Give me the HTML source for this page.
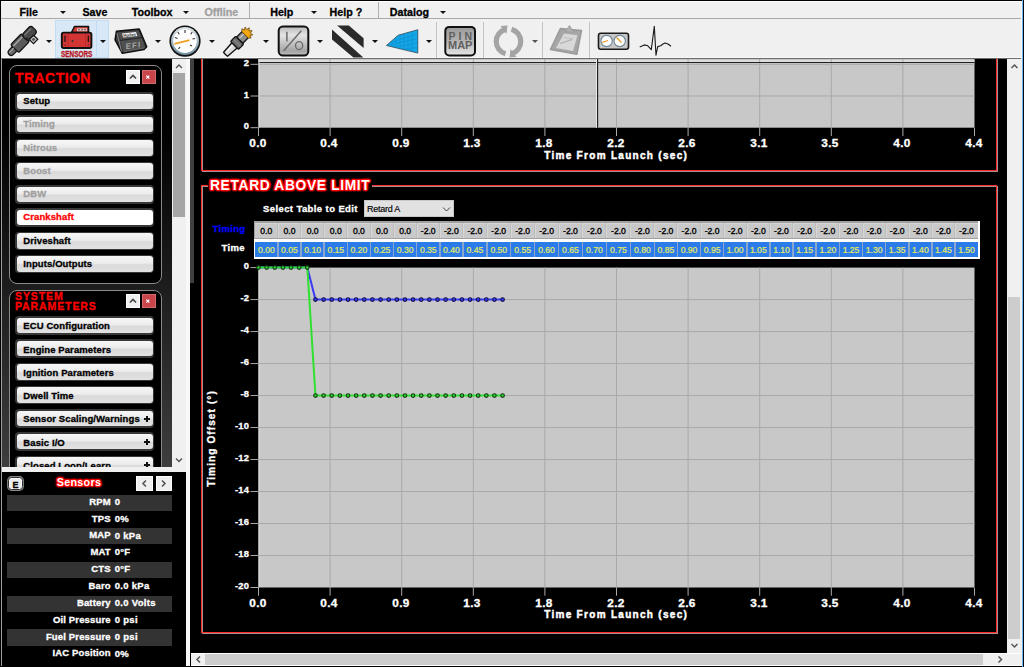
<!DOCTYPE html><html><head><meta charset="utf-8"><style>
*{margin:0;padding:0;box-sizing:border-box}
html,body{width:1024px;height:667px;overflow:hidden;background:#000;font-family:"Liberation Sans",sans-serif;position:relative}
.a{position:absolute}
.t{white-space:nowrap}
.s{-webkit-text-stroke:0.3px currentColor}
.btn{position:absolute;left:15px;width:139px;height:18.6px;border-radius:4px;background:#383838}
.btn b{position:absolute;left:1.5px;top:1.5px;right:1.5px;bottom:1.5px;border-radius:3px;background:linear-gradient(#f7f7f7,#ececec 45%,#dadada 55%,#e2e2e2)}
.btn.sel b{background:#fff}
.dd{position:absolute;width:0;height:0;border-left:3.2px solid transparent;border-right:3.2px solid transparent;border-top:3.4px solid #111}
</style></head><body>

<div class="a" style="left:1px;top:1px;width:1021px;height:17px;background:#f0f0f0"></div>
<div class="a" style="left:1px;top:18px;width:1021px;height:1px;background:#a8a8a8"></div>
<div class="a" style="left:1px;top:19px;width:1021px;height:39px;background:#f0f0f0"></div>
<div class="a" style="left:1px;top:57px;width:1021px;height:1px;background:#f8f8f8"></div>
<div class="a" style="left:1px;top:58px;width:1021px;height:1px;background:#6c6c6c"></div>
<div class="a" style="left:1021px;top:1px;width:1px;height:665px;background:#fdfaf2"></div>
<div class="a" style="left:1022px;top:0px;width:1px;height:667px;background:#6ab4f0"></div>
<div class="a" style="left:1023px;top:0px;width:1px;height:667px;background:#050a14"></div>
<div class="a" style="left:1px;top:1px;width:1020px;height:1px;background:#fff"></div>
<div class="a t s" style="left:19.50px;top:6.62px;font-size:10.7px;line-height:11.952px;color:#000;font-weight:bold;letter-spacing:0px;">File</div>
<div class="dd" style="left:59.8px;top:10.9px"></div>
<div class="a t s" style="left:82.40px;top:6.62px;font-size:10.7px;line-height:11.952px;color:#000;font-weight:bold;letter-spacing:0px;">Save</div>
<div class="a t s" style="left:131.70px;top:6.62px;font-size:10.7px;line-height:11.952px;color:#000;font-weight:bold;letter-spacing:0px;">Toolbox</div>
<div class="dd" style="left:183.2px;top:10.9px"></div>
<div class="a t s" style="left:204.40px;top:6.62px;font-size:10.7px;line-height:11.952px;color:#a0a0a0;font-weight:bold;letter-spacing:0px;">Offline</div>
<div class="a" style="left:249px;top:2px;width:1px;height:16px;background:#b0b0b0"></div>
<div class="a t s" style="left:270.20px;top:6.62px;font-size:10.7px;line-height:11.952px;color:#000;font-weight:bold;letter-spacing:0px;">Help</div>
<div class="dd" style="left:311.2px;top:10.9px"></div>
<div class="a t s" style="left:329.50px;top:6.62px;font-size:10.7px;line-height:11.952px;color:#000;font-weight:bold;letter-spacing:0px;">Help ?</div>
<div class="a" style="left:378px;top:2px;width:1px;height:16px;background:#b0b0b0"></div>
<div class="a t s" style="left:389.80px;top:6.62px;font-size:10.7px;line-height:11.952px;color:#000;font-weight:bold;letter-spacing:0px;">Datalog</div>
<div class="dd" style="left:439.8px;top:10.9px"></div>
<div class="a" style="left:436px;top:22px;width:1px;height:36px;background:#c4c4c4"></div>
<div class="a" style="left:483px;top:22px;width:1px;height:36px;background:#c4c4c4"></div>
<div class="a" style="left:542px;top:22px;width:1px;height:36px;background:#c4c4c4"></div>
<div class="a" style="left:589px;top:22px;width:1px;height:36px;background:#c4c4c4"></div>
<div class="a" style="left:55px;top:20px;width:54px;height:38px;background:#d9e8f6;border:1px solid #c3dcf3"></div>
<div class="a" style="left:96px;top:20px;width:1px;height:38px;background:#c3dcf3"></div>
<div class="dd" style="left:46.4px;top:40px"></div>
<div class="dd" style="left:100.2px;top:40px"></div>
<div class="dd" style="left:154.8px;top:40px"></div>
<div class="dd" style="left:208.9px;top:40px"></div>
<div class="dd" style="left:263px;top:40px"></div>
<div class="dd" style="left:317.3px;top:40px"></div>
<div class="dd" style="left:371.6px;top:40px"></div>
<div class="dd" style="left:426px;top:40px"></div>
<div class="dd" style="left:531.8px;top:40px;border-top-color:#555"></div>
<svg class="a" style="left:0;top:0" width="700" height="60" viewBox="0 0 700 60">
<defs>
<linearGradient id="g1" x1="0" y1="0" x2="0" y2="1"><stop offset="0" stop-color="#b8b8b8"/><stop offset="0.3" stop-color="#e4e4e4"/><stop offset="0.85" stop-color="#a4a4a4"/><stop offset="1" stop-color="#c4c4c4"/></linearGradient>
<linearGradient id="g2" x1="0" y1="0" x2="0" y2="1"><stop offset="0" stop-color="#9a9a9a"/><stop offset="0.5" stop-color="#b4b4b4"/><stop offset="1" stop-color="#e6e6e6"/></linearGradient>
<linearGradient id="g3" x1="0" y1="0" x2="0" y2="1"><stop offset="0" stop-color="#dfe6ea"/><stop offset="1" stop-color="#6f8c9c"/></linearGradient>
</defs>
<!-- injector -->
<g transform="translate(9.8,53.8) rotate(-46)">
<rect x="-1" y="-3.1" width="9.5" height="6.2" rx="2.8" fill="#6a6a6a" stroke="#151515" stroke-width="1.3"/>
<rect x="7" y="-5.6" width="15.5" height="11.2" rx="1.5" fill="#5a5a5a" stroke="#151515" stroke-width="1.3"/>
<rect x="21.5" y="-4.6" width="13.5" height="9.2" rx="3.2" fill="#4a4a4a" stroke="#151515" stroke-width="1.3"/>
<rect x="23.8" y="4.2" width="6" height="5.8" fill="#e0e0e0" stroke="#151515" stroke-width="1.3"/>
<rect x="25.3" y="5.7" width="3" height="2.8" fill="#555"/>
<line x1="8" y1="-2.8" x2="21" y2="-2.8" stroke="#a0a0a0" stroke-width="1.6"/>
<line x1="0.5" y1="-1.3" x2="7" y2="-1.3" stroke="#a9a9a9" stroke-width="1"/>
<line x1="23.5" y1="-2.3" x2="33" y2="-2.3" stroke="#7a7a7a" stroke-width="1.3"/>
<line x1="22" y1="2" x2="24" y2="2" stroke="#222" stroke-width="2"/>
</g>
<!-- ECU red -->
<path d="M71.5 32.5 L74.5 26.5 L88.5 26.5 L88.5 32.5 Z" fill="#d43a3a" stroke="#111" stroke-width="1.6" stroke-linejoin="round"/>
<rect x="77" y="28.3" width="10" height="3" fill="#e8c0c0"/>
<circle cx="79" cy="29.8" r="0.7" fill="#222"/><circle cx="82" cy="29.8" r="0.7" fill="#222"/><circle cx="85" cy="29.8" r="0.7" fill="#222"/>
<rect x="61.8" y="32.6" width="29.6" height="15.4" rx="1.8" fill="#d33535" stroke="#111" stroke-width="1.9"/>
<line x1="65" y1="35.5" x2="65" y2="42" stroke="#111" stroke-width="1.2"/>
<line x1="88.3" y1="35.5" x2="88.3" y2="42" stroke="#111" stroke-width="1.2"/>
<circle cx="65" cy="45" r="0.6" fill="#111"/><circle cx="88.3" cy="45" r="0.6" fill="#111"/>
<line x1="68" y1="34" x2="68" y2="47" stroke="#b82a2a" stroke-width="0.8"/>
<line x1="85.5" y1="34" x2="85.5" y2="47" stroke="#b82a2a" stroke-width="0.8"/>
<ellipse cx="72.5" cy="41" rx="0.9" ry="1.2" fill="#333"/>
<text x="76.7" y="56.8" font-family="Liberation Sans" font-weight="bold" font-size="8.2" fill="#b8161e" stroke="#b8161e" stroke-width="0.35" text-anchor="middle" textLength="31.3" lengthAdjust="spacingAndGlyphs">SENSORS</text>
<!-- EFI -->
<path d="M116.5 31.2 L139.2 29 L146.7 46.8 L144 49.5 L122.4 53.3 L115.1 39.8 Z" fill="#3c3c3c" stroke="#111" stroke-width="1.6" stroke-linejoin="round"/>
<path d="M118.2 32.6 L138.2 30.6 L141.5 37.4 L120.8 40 Z" fill="#4e4e4e"/>
<path d="M122 33.4 L136 32 L137.3 36 L123.2 37.6 Z" fill="#f4f4f4"/>
<text x="129.7" y="36.4" font-family="Liberation Sans" font-weight="bold" font-size="4.2" fill="#333" text-anchor="middle" transform="rotate(-6 129.7 35)">Holley</text>
<path d="M120.2 41 L142 38.2 L145 47.2 L123.4 51.4 Z" fill="#505050"/>
<line x1="117" y1="33" x2="121.5" y2="51.5" stroke="#8a8a8a" stroke-width="1"/>
<line x1="120" y1="40.4" x2="142" y2="37.6" stroke="#222" stroke-width="0.9"/>
<line x1="123.5" y1="51.8" x2="144.5" y2="47.8" stroke="#7a7a7a" stroke-width="0.8"/>
<text x="133.5" y="48.2" font-family="Liberation Sans" font-weight="bold" font-size="8" fill="#a4a4a4" text-anchor="middle" letter-spacing="1" transform="translate(133.5 45) rotate(-8) skewX(-8) translate(-133.5 -45)">EFI</text>
<!-- gauge -->
<circle cx="185" cy="41.1" r="15.6" fill="#111"/>
<circle cx="185" cy="41.1" r="14" fill="url(#g3)"/>
<circle cx="185" cy="41.1" r="11.8" fill="#fdfdfd"/>
<g stroke="#333" stroke-width="1.1">
<line x1="185" y1="30" x2="185" y2="33"/>
<line x1="177.8" y1="32" x2="179.3" y2="34.2"/>
<line x1="192.2" y1="32" x2="190.7" y2="34.2"/>
<line x1="175" y1="37.5" x2="177.5" y2="38.5"/>
<line x1="195" y1="38.5" x2="192.5" y2="39"/>
<line x1="178.5" y1="49" x2="180" y2="47"/>
<line x1="192" y1="46" x2="190" y2="45"/>
</g>
<line x1="174.4" y1="43.9" x2="189.5" y2="40.2" stroke="#f0a020" stroke-width="1.8"/>
<!-- spark plug -->
<g transform="translate(226.3,53.6) rotate(-45)">
<path d="M-1 -2.8 Q-1.5 0 -1 2.8 L12 3.8 L12 -3.8 Z" fill="#dcdcdc" stroke="#141414" stroke-width="1.4" stroke-linejoin="round"/>
<line x1="1" y1="-1" x2="11" y2="-1.5" stroke="#f8f8f8" stroke-width="1.2"/>
<rect x="11.5" y="-5.6" width="7.5" height="11.2" rx="1.2" fill="#6c6c6c" stroke="#141414" stroke-width="1.4"/>
<line x1="15.2" y1="-5" x2="15.2" y2="5" stroke="#8c8c8c" stroke-width="1"/>
<rect x="19" y="-4.4" width="8" height="8.8" fill="#8e8e8e" stroke="#141414" stroke-width="1.3"/>
<line x1="20" y1="-1.5" x2="26" y2="-1.5" stroke="#c8c8c8" stroke-width="1.2"/>
<path d="M26.5 -4.5 L28.5 -6.5 L29.5 -3.8 L32 -5.5 L31.5 -2.5 L34.5 -2 L32 0 L34.5 2 L31.5 2.5 L32 5.5 L29.5 3.8 L28.5 6.5 L26.5 4.5 Z" fill="#f5a810" stroke="#5a3800" stroke-width="0.7"/>
</g>
<!-- I/O -->
<rect x="278.7" y="26.4" width="29.6" height="29.1" rx="4.2" fill="url(#g1)" stroke="#111" stroke-width="2"/>
<line x1="286.9" y1="31.7" x2="286.9" y2="41.4" stroke="#6a6a6a" stroke-width="1.5"/>
<line x1="283.7" y1="50.8" x2="301.3" y2="30.8" stroke="#6a6a6a" stroke-width="1.4"/>
<ellipse cx="299.1" cy="45.6" rx="3.6" ry="4" fill="none" stroke="#6a6a6a" stroke-width="1.3"/>
<!-- stripes -->
<path d="M337.1 25.4 L348.8 25.4 L363.6 38.2 L363.6 47.9 Z" fill="#2a2a2a"/>
<path d="M332 29.4 L332 39.4 L353.4 57.5 L363.3 57.5 Z" fill="#2a2a2a"/>
<!-- blue quad -->
<path d="M386.4 45.5 L398.2 35.2 L417.8 29.7 L417.8 53.1 Z" fill="#14a6e6" stroke="#2a3a44" stroke-width="0.7"/>
<g stroke="#0b82c2" stroke-width="0.5" opacity="0.8">
<line x1="392" y1="40.7" x2="392" y2="47"/><line x1="396" y1="37" x2="396" y2="48.3"/><line x1="400" y1="34.7" x2="400" y2="49.5"/><line x1="404" y1="33.5" x2="404" y2="50.5"/><line x1="408" y1="32.5" x2="408" y2="51.2"/><line x1="412" y1="31.3" x2="412" y2="52"/>
<line x1="390" y1="42.5" x2="417.8" y2="34"/><line x1="389" y1="45" x2="417.8" y2="38.5"/><line x1="395" y1="47.2" x2="417.8" y2="43"/><line x1="402" y1="49.2" x2="417.8" y2="47.5"/>
</g>
<!-- PIN MAP -->
<rect x="445.3" y="26.9" width="29.7" height="28.6" rx="4" fill="url(#g2)" stroke="#111" stroke-width="2"/>
<text x="460.3" y="39.9" font-family="Liberation Sans" font-weight="bold" font-size="10.5" fill="#606060" text-anchor="middle" letter-spacing="3" dx="1.5">PIN</text>
<text x="460.2" y="49.2" font-family="Liberation Sans" font-weight="bold" font-size="11" fill="#606060" text-anchor="middle">MAP</text>
<!-- refresh -->
<path d="M505.5 29.2 A12.8 12.8 0 0 0 505.5 53.8" fill="none" stroke="#a4a4a4" stroke-width="5.2"/>
<path d="M511.5 53.8 A12.8 12.8 0 0 0 511.5 29.2" fill="none" stroke="#a4a4a4" stroke-width="5.2"/>
<path d="M500.5 26 L507.5 25.5 L506.5 34 Z" fill="#a4a4a4"/>
<path d="M516.5 57 L509.5 57.5 L510.5 49 Z" fill="#a4a4a4"/>
<!-- clipboard -->
<path d="M560.4 28.5 L581.5 30.5 L576.9 54.2 L550.4 49.6 Z" fill="#a6a6a6" stroke="#9a9a9a" stroke-width="1.5" stroke-linejoin="round"/>
<path d="M564 33.5 L577.5 35.2 L573 51 L556 48 Z" fill="#d8d8d8"/>
<path d="M565.5 31.5 L569.5 25.5 L573.5 32.5 Z" fill="#b0b0b0" stroke="#a0a0a0" stroke-width="1"/>
<line x1="564" y1="37.5" x2="573" y2="38.8" stroke="#b8b8b8" stroke-width="0.8"/>
<line x1="560" y1="43.5" x2="572" y2="39.5" stroke="#a8a8a8" stroke-width="1"/>
<!-- gauges box -->
<rect x="598.5" y="33.2" width="30" height="16" rx="2.2" fill="#c8c8c8" stroke="#1a1a1a" stroke-width="1.6"/>
<circle cx="606.6" cy="41" r="6.2" fill="#6f8797"/><circle cx="606.6" cy="41" r="5.1" fill="#fff"/>
<circle cx="619.7" cy="41" r="6.2" fill="#6f8797"/><circle cx="619.7" cy="41" r="5.1" fill="#fff"/>
<line x1="602" y1="42.5" x2="608" y2="40.5" stroke="#e8961e" stroke-width="1.3"/>
<line x1="616.5" y1="37.5" x2="621.5" y2="42.5" stroke="#e8961e" stroke-width="1.3"/>
<!-- ecg -->
<polyline points="639.7,47 642,46 644.4,44.9 647.8,45.8 651.3,49.6 654.3,26.4 656,55.2 657.7,46.6 660.7,45.8 663,44 665,43 668,44 671,46.2" fill="none" stroke="#1a1a1a" stroke-width="1.1" stroke-linejoin="round"/>
</svg>
<div class="a" style="left:1px;top:59px;width:1px;height:607px;background:#a0a0a0"></div>
<div class="a" style="left:2px;top:59px;width:170px;height:408px;background:linear-gradient(#000 0px,#000 70px,#3e3e3e 408px)"></div>
<div class="a" style="left:172px;top:59px;width:14px;height:408px;background:#f0f0f0"></div>
<div class="a" style="left:173px;top:73px;width:12px;height:144px;background:#a6a6a6"></div>
<svg class="a" style="left:172px;top:59px" width="14" height="408"><path d="M4 9 L7 6 L10 9" fill="none" stroke="#555" stroke-width="1.4"/><path d="M4 399.5 L7 402.5 L10 399.5" fill="none" stroke="#555" stroke-width="1.4"/></svg>
<div class="a" style="left:186px;top:59px;width:4px;height:607px;background:#f8f8f8"></div>
<div class="a" style="left:9px;top:65px;width:153px;height:219px;border:1px solid #8a8a8a;border-radius:8px;background:#000"></div>
<div class="a" style="left:9px;top:290px;width:153px;height:300px;border:1px solid #8a8a8a;border-radius:8px;background:#000"></div>
<div class="a t s" style="left:15.00px;top:70.63px;font-size:14px;line-height:15.638px;color:#ff0000;font-weight:bold;letter-spacing:0.45px;">TRACTION</div>
<div class="a t s" style="left:15.00px;top:290.80px;font-size:10.5px;line-height:11.729px;color:#ff0000;font-weight:bold;letter-spacing:0.9px;line-height:10px">SYSTEM</div>
<div class="a t s" style="left:15.00px;top:300.80px;font-size:10.5px;line-height:11.729px;color:#ff0000;font-weight:bold;letter-spacing:0.9px;">PARAMETERS</div>
<div class="a" style="left:126px;top:70px;width:14px;height:14px;background:#f0f0f0;border:1px solid #fff"></div>
<div class="a" style="left:142px;top:70px;width:13.5px;height:14px;background:#c8464a;border:1px solid #d06a6d"></div>
<svg class="a" style="left:126px;top:70px" width="30" height="14"><path d="M4 8.5 L7 5.5 L10 8.5" fill="none" stroke="#444" stroke-width="1.6"/><path d="M20.3 5.6 L23.3 8.6 M23.3 5.6 L20.3 8.6" stroke="#fff" stroke-width="1.2"/></svg>
<div class="a" style="left:126px;top:294px;width:14px;height:14px;background:#f0f0f0;border:1px solid #fff"></div>
<div class="a" style="left:142px;top:294px;width:13.5px;height:14px;background:#c8464a;border:1px solid #d06a6d"></div>
<svg class="a" style="left:126px;top:294px" width="30" height="14"><path d="M4 8.5 L7 5.5 L10 8.5" fill="none" stroke="#444" stroke-width="1.6"/><path d="M20.3 5.6 L23.3 8.6 M23.3 5.6 L20.3 8.6" stroke="#fff" stroke-width="1.2"/></svg>
<div class="btn" style="top:92.0px"><b></b></div>
<div class="a t s" style="left:23.30px;top:95.70px;font-size:9.5px;line-height:10.611px;color:#000;font-weight:bold;letter-spacing:0.1px;">Setup</div>
<div class="btn" style="top:115.2px"><b></b></div>
<div class="a t s" style="left:23.30px;top:118.70px;font-size:9.5px;line-height:10.611px;color:#a0a0a0;font-weight:bold;letter-spacing:0.1px;">Timing</div>
<div class="btn" style="top:138.5px"><b></b></div>
<div class="a t s" style="left:23.30px;top:142.70px;font-size:9.5px;line-height:10.611px;color:#a0a0a0;font-weight:bold;letter-spacing:0.1px;">Nitrous</div>
<div class="btn" style="top:161.8px"><b></b></div>
<div class="a t s" style="left:23.30px;top:165.70px;font-size:9.5px;line-height:10.611px;color:#a0a0a0;font-weight:bold;letter-spacing:0.1px;">Boost</div>
<div class="btn" style="top:185.0px"><b></b></div>
<div class="a t s" style="left:23.30px;top:188.70px;font-size:9.5px;line-height:10.611px;color:#a0a0a0;font-weight:bold;letter-spacing:0.1px;">DBW</div>
<div class="btn sel" style="top:208.2px"><b></b></div>
<div class="a t s" style="left:23.30px;top:211.70px;font-size:9.5px;line-height:10.611px;color:#ff0000;font-weight:bold;letter-spacing:0.1px;">Crankshaft</div>
<div class="btn" style="top:231.5px"><b></b></div>
<div class="a t s" style="left:23.30px;top:235.70px;font-size:9.5px;line-height:10.611px;color:#000;font-weight:bold;letter-spacing:0.1px;">Driveshaft</div>
<div class="btn" style="top:254.8px"><b></b></div>
<div class="a t s" style="left:23.30px;top:258.70px;font-size:9.5px;line-height:10.611px;color:#000;font-weight:bold;letter-spacing:0.1px;">Inputs/Outputs</div>
<div class="btn" style="top:316.2px"><b></b></div>
<div class="a t s" style="left:23.30px;top:320.70px;font-size:9.5px;line-height:10.611px;color:#000;font-weight:bold;letter-spacing:0.1px;">ECU Configuration</div>
<div class="btn" style="top:339.4px"><b></b></div>
<div class="a t s" style="left:23.30px;top:344.70px;font-size:9.5px;line-height:10.611px;color:#000;font-weight:bold;letter-spacing:0.1px;">Engine Parameters</div>
<div class="btn" style="top:362.7px"><b></b></div>
<div class="a t s" style="left:23.30px;top:367.70px;font-size:9.5px;line-height:10.611px;color:#000;font-weight:bold;letter-spacing:0.1px;">Ignition Parameters</div>
<div class="btn" style="top:385.9px"><b></b></div>
<div class="a t s" style="left:23.30px;top:390.70px;font-size:9.5px;line-height:10.611px;color:#000;font-weight:bold;letter-spacing:0.1px;">Dwell Time</div>
<div class="btn" style="top:409.2px"><b></b></div>
<div class="a t s" style="left:23.30px;top:413.70px;font-size:9.5px;line-height:10.611px;color:#000;font-weight:bold;letter-spacing:0.1px;">Sensor Scaling/Warnings</div>
<div class="a" style="left:144.2px;top:417.60px;width:6px;height:2px;background:#111"></div>
<div class="a" style="left:146.2px;top:415.60px;width:2px;height:6px;background:#111"></div>
<div class="btn" style="top:432.4px"><b></b></div>
<div class="a t s" style="left:23.30px;top:437.70px;font-size:9.5px;line-height:10.611px;color:#000;font-weight:bold;letter-spacing:0.1px;">Basic I/O</div>
<div class="a" style="left:144.2px;top:440.80px;width:6px;height:2px;background:#111"></div>
<div class="a" style="left:146.2px;top:438.80px;width:2px;height:6px;background:#111"></div>
<div class="btn" style="top:455.7px"><b></b></div>
<div class="a t s" style="left:23.30px;top:460.70px;font-size:9.5px;line-height:10.611px;color:#000;font-weight:bold;letter-spacing:0.1px;">Closed Loop/Learn</div>
<div class="a" style="left:144.2px;top:464.10px;width:6px;height:2px;background:#111"></div>
<div class="a" style="left:146.2px;top:462.10px;width:2px;height:6px;background:#111"></div>
<div class="a" style="left:2px;top:467px;width:184px;height:5px;background:#f0f0f0"></div>
<div class="a" style="left:2px;top:472px;width:184px;height:194px;background:#000"></div>
<div class="a" style="left:1px;top:666px;width:189px;height:1px;background:#000"></div>
<div class="a" style="left:8px;top:477px;width:14.6px;height:13.2px;background:#ececec;border:1.2px solid #2e2e2e;border-radius:3.5px;box-shadow:0 0 0 0.9px #8a8a8a,inset 0 0 0 0.9px #fff"></div>
<div class="a t s" style="left:12.40px;top:480.16px;font-size:9px;line-height:10.053px;color:#000;font-weight:bold;letter-spacing:0px;">E</div>
<div class="a t" style="left:-121.00px;width:400px;text-align:center;top:475.53px;font-size:10.8px;line-height:12.064px;color:#fff;font-weight:bold;letter-spacing:0.25px;text-shadow:1.4px 0 1.2px #f00,-1.4px 0 1.2px #f00,0 1.4px 1.2px #f00,0 -1.4px 1.2px #f00,1px 1px 1.2px #f00,-1px -1px 1.2px #f00,1px -1px 1.2px #f00,-1px 1px 1.2px #f00,0 0 3px #f00">Sensors</div>
<div class="a" style="left:136px;top:476px;width:17px;height:15px;background:#efefef;border:1px solid #fff"></div>
<div class="a" style="left:156px;top:476px;width:16px;height:15px;background:#efefef;border:1px solid #fff"></div>
<svg class="a" style="left:136px;top:476px" width="36" height="15"><path d="M10 4.5 L7 7.5 L10 10.5" fill="none" stroke="#555" stroke-width="1.6"/><path d="M26 4.5 L29 7.5 L26 10.5" fill="none" stroke="#555" stroke-width="1.6"/></svg>
<div class="a" style="left:7px;top:494.5px;width:165px;height:16.3px;background:#333"></div>
<div class="a t s" style="left:-189.30px;width:300px;text-align:right;top:496.70px;font-size:9.5px;line-height:10.611px;color:#fff;font-weight:bold;letter-spacing:0.15px;">RPM</div>
<div class="a t s" style="left:114.70px;top:496.70px;font-size:9.5px;line-height:10.611px;color:#fff;font-weight:bold;letter-spacing:0.3px;">0</div>
<div class="a t s" style="left:-189.30px;width:300px;text-align:right;top:513.70px;font-size:9.5px;line-height:10.611px;color:#fff;font-weight:bold;letter-spacing:0.15px;">TPS</div>
<div class="a t s" style="left:114.70px;top:513.70px;font-size:9.5px;line-height:10.611px;color:#fff;font-weight:bold;letter-spacing:0.3px;">0%</div>
<div class="a" style="left:7px;top:528.2px;width:165px;height:16.3px;background:#333"></div>
<div class="a t s" style="left:-189.30px;width:300px;text-align:right;top:529.70px;font-size:9.5px;line-height:10.611px;color:#fff;font-weight:bold;letter-spacing:0.15px;">MAP</div>
<div class="a t s" style="left:114.70px;top:530.70px;font-size:9.5px;line-height:10.611px;color:#fff;font-weight:bold;letter-spacing:0.3px;">0 kPa</div>
<div class="a t s" style="left:-189.30px;width:300px;text-align:right;top:546.70px;font-size:9.5px;line-height:10.611px;color:#fff;font-weight:bold;letter-spacing:0.15px;">MAT</div>
<div class="a t s" style="left:114.70px;top:546.70px;font-size:9.5px;line-height:10.611px;color:#fff;font-weight:bold;letter-spacing:0.3px;">0°F</div>
<div class="a" style="left:7px;top:561.9px;width:165px;height:16.3px;background:#333"></div>
<div class="a t s" style="left:-189.30px;width:300px;text-align:right;top:563.70px;font-size:9.5px;line-height:10.611px;color:#fff;font-weight:bold;letter-spacing:0.15px;">CTS</div>
<div class="a t s" style="left:114.70px;top:563.70px;font-size:9.5px;line-height:10.611px;color:#fff;font-weight:bold;letter-spacing:0.3px;">0°F</div>
<div class="a t s" style="left:-189.30px;width:300px;text-align:right;top:580.70px;font-size:9.5px;line-height:10.611px;color:#fff;font-weight:bold;letter-spacing:0.15px;">Baro</div>
<div class="a t s" style="left:114.70px;top:580.70px;font-size:9.5px;line-height:10.611px;color:#fff;font-weight:bold;letter-spacing:0.3px;">0.0 kPa</div>
<div class="a" style="left:7px;top:595.6px;width:165px;height:16.3px;background:#333"></div>
<div class="a t s" style="left:-189.30px;width:300px;text-align:right;top:597.70px;font-size:9.5px;line-height:10.611px;color:#fff;font-weight:bold;letter-spacing:0.15px;">Battery</div>
<div class="a t s" style="left:114.70px;top:597.70px;font-size:9.5px;line-height:10.611px;color:#fff;font-weight:bold;letter-spacing:0.3px;">0.0 Volts</div>
<div class="a t s" style="left:-189.30px;width:300px;text-align:right;top:614.70px;font-size:9.5px;line-height:10.611px;color:#fff;font-weight:bold;letter-spacing:0.15px;">Oil Pressure</div>
<div class="a t s" style="left:114.70px;top:614.70px;font-size:9.5px;line-height:10.611px;color:#fff;font-weight:bold;letter-spacing:0.3px;">0 psi</div>
<div class="a" style="left:7px;top:629.3px;width:165px;height:16.3px;background:#333"></div>
<div class="a t s" style="left:-189.30px;width:300px;text-align:right;top:631.70px;font-size:9.5px;line-height:10.611px;color:#fff;font-weight:bold;letter-spacing:0.15px;">Fuel Pressure</div>
<div class="a t s" style="left:114.70px;top:631.70px;font-size:9.5px;line-height:10.611px;color:#fff;font-weight:bold;letter-spacing:0.3px;">0 psi</div>
<div class="a t s" style="left:-189.30px;width:300px;text-align:right;top:647.70px;font-size:9.5px;line-height:10.611px;color:#fff;font-weight:bold;letter-spacing:0.15px;">IAC Position</div>
<div class="a t s" style="left:114.70px;top:648.70px;font-size:9.5px;line-height:10.611px;color:#fff;font-weight:bold;letter-spacing:0.3px;">0%</div>
<div class="a" style="left:0;top:59px;width:1024px;height:608px;overflow:hidden"><div class="a" style="left:0;top:-59px;width:1024px;height:667px">
<div class="a" style="left:190px;top:59px;width:4px;height:224px;background:#404040"></div>
<div class="a" style="left:1007px;top:59px;width:15px;height:594px;background:#f0f0f0"></div>
<div class="a" style="left:1008px;top:297px;width:12px;height:342px;background:#cdcdcd"></div>
<svg class="a" style="left:1007px;top:59px" width="15" height="594"><path d="M4.5 9 L7.5 6 L10.5 9" fill="none" stroke="#555" stroke-width="1.5"/><path d="M4.5 585 L7.5 588 L10.5 585" fill="none" stroke="#555" stroke-width="1.5"/></svg>
<div class="a" style="left:191px;top:653px;width:831px;height:13px;background:#f0f0f0;border-top:1px solid #fff;border-bottom:1px solid #fff"></div>
<div class="a" style="left:205px;top:654px;width:777.5px;height:11px;background:#cdcdcd"></div>
<svg class="a" style="left:191px;top:653px" width="831" height="13"><path d="M9 3.5 L6 6.5 L9 9.5" fill="none" stroke="#555" stroke-width="1.5"/><path d="M807.5 3.5 L810.5 6.5 L807.5 9.5" fill="none" stroke="#555" stroke-width="1.5"/></svg>
<div class="a" style="left:191px;top:666px;width:831px;height:1px;background:#000"></div>
<div class="a" style="left:201px;top:40px;width:796px;height:131px;border:1px solid #ff2a2a;box-shadow:1px 1px 0 #a89090,inset 1px 1px 0 #a89090"></div>
<div class="a" style="left:201px;top:185px;width:796px;height:448px;border:1px solid #ff2a2a;box-shadow:1px 1px 0 #a89090,inset 1px 1px 0 #a89090"></div>
<div class="a" style="left:208px;top:180px;width:164px;height:9px;background:#000"></div>
<div class="a t" style="left:210.00px;top:177.81px;font-size:13.8px;line-height:15.415px;color:#fff;font-weight:bold;letter-spacing:0.65px;text-shadow:1.4px 0 1.2px #f00,-1.4px 0 1.2px #f00,0 1.4px 1.2px #f00,0 -1.4px 1.2px #f00,1px 1px 1.2px #f00,-1px -1px 1.2px #f00,1px -1px 1.2px #f00,-1px 1px 1.2px #f00,0 0 3px #f00">RETARD ABOVE LIMIT</div>
<svg class="a" style="left:0;top:0" width="1024" height="667" viewBox="0 0 1024 667">
<rect x="258.5" y="40" width="716.0" height="87.7" fill="#c8c8c8"/>
<rect x="258.5" y="60" width="716.0" height="2" fill="#dcdcdc"/>
<line x1="330.1" y1="40" x2="330.1" y2="127.7" stroke="#a9a9a9" stroke-width="1"/>
<line x1="401.7" y1="40" x2="401.7" y2="127.7" stroke="#a9a9a9" stroke-width="1"/>
<line x1="473.3" y1="40" x2="473.3" y2="127.7" stroke="#a9a9a9" stroke-width="1"/>
<line x1="544.9" y1="40" x2="544.9" y2="127.7" stroke="#a9a9a9" stroke-width="1"/>
<line x1="616.5" y1="40" x2="616.5" y2="127.7" stroke="#a9a9a9" stroke-width="1"/>
<line x1="688.1" y1="40" x2="688.1" y2="127.7" stroke="#a9a9a9" stroke-width="1"/>
<line x1="759.7" y1="40" x2="759.7" y2="127.7" stroke="#a9a9a9" stroke-width="1"/>
<line x1="831.3" y1="40" x2="831.3" y2="127.7" stroke="#a9a9a9" stroke-width="1"/>
<line x1="902.9" y1="40" x2="902.9" y2="127.7" stroke="#a9a9a9" stroke-width="1"/>
<line x1="258.5" y1="64.3" x2="974.5" y2="64.3" stroke="#a9a9a9" stroke-width="1"/>
<line x1="258.5" y1="96.0" x2="974.5" y2="96.0" stroke="#a9a9a9" stroke-width="1"/>
<line x1="258.5" y1="62.5" x2="974.5" y2="62.5" stroke="#222" stroke-width="1"/>
<line x1="259.0" y1="40" x2="259.0" y2="127.7" stroke="#e0e0e0" stroke-width="1"/>
<line x1="596.5" y1="59" x2="596.5" y2="127.7" stroke="#e8e8e8" stroke-width="1"/>
<line x1="597.6" y1="59" x2="597.6" y2="127.7" stroke="#1a1a1a" stroke-width="1.1"/>
<line x1="250.5" y1="64.3" x2="258.5" y2="64.3" stroke="#aaa" stroke-width="1"/>
<line x1="250.5" y1="96.0" x2="258.5" y2="96.0" stroke="#aaa" stroke-width="1"/>
<line x1="250.5" y1="127.7" x2="258.5" y2="127.7" stroke="#aaa" stroke-width="1"/>
<line x1="258.5" y1="127.7" x2="258.5" y2="136" stroke="#aaa" stroke-width="1"/>
<line x1="330.1" y1="127.7" x2="330.1" y2="136" stroke="#aaa" stroke-width="1"/>
<line x1="401.7" y1="127.7" x2="401.7" y2="136" stroke="#aaa" stroke-width="1"/>
<line x1="473.3" y1="127.7" x2="473.3" y2="136" stroke="#aaa" stroke-width="1"/>
<line x1="544.9" y1="127.7" x2="544.9" y2="136" stroke="#aaa" stroke-width="1"/>
<line x1="616.5" y1="127.7" x2="616.5" y2="136" stroke="#aaa" stroke-width="1"/>
<line x1="688.1" y1="127.7" x2="688.1" y2="136" stroke="#aaa" stroke-width="1"/>
<line x1="759.7" y1="127.7" x2="759.7" y2="136" stroke="#aaa" stroke-width="1"/>
<line x1="831.3" y1="127.7" x2="831.3" y2="136" stroke="#aaa" stroke-width="1"/>
<line x1="902.9" y1="127.7" x2="902.9" y2="136" stroke="#aaa" stroke-width="1"/>
<line x1="974.5" y1="127.7" x2="974.5" y2="136" stroke="#aaa" stroke-width="1"/>
<rect x="258.5" y="267.6" width="716.0" height="319.9" fill="#c8c8c8"/>
<line x1="259.0" y1="267.6" x2="259.0" y2="587.5" stroke="#e0e0e0" stroke-width="1"/>
<line x1="330.1" y1="267.6" x2="330.1" y2="587.5" stroke="#a9a9a9" stroke-width="1"/>
<line x1="401.7" y1="267.6" x2="401.7" y2="587.5" stroke="#a9a9a9" stroke-width="1"/>
<line x1="473.3" y1="267.6" x2="473.3" y2="587.5" stroke="#a9a9a9" stroke-width="1"/>
<line x1="544.9" y1="267.6" x2="544.9" y2="587.5" stroke="#a9a9a9" stroke-width="1"/>
<line x1="616.5" y1="267.6" x2="616.5" y2="587.5" stroke="#a9a9a9" stroke-width="1"/>
<line x1="688.1" y1="267.6" x2="688.1" y2="587.5" stroke="#a9a9a9" stroke-width="1"/>
<line x1="759.7" y1="267.6" x2="759.7" y2="587.5" stroke="#a9a9a9" stroke-width="1"/>
<line x1="831.3" y1="267.6" x2="831.3" y2="587.5" stroke="#a9a9a9" stroke-width="1"/>
<line x1="902.9" y1="267.6" x2="902.9" y2="587.5" stroke="#a9a9a9" stroke-width="1"/>
<line x1="258.5" y1="299.59000000000003" x2="974.5" y2="299.59000000000003" stroke="#a9a9a9" stroke-width="1"/>
<line x1="258.5" y1="331.58000000000004" x2="974.5" y2="331.58000000000004" stroke="#a9a9a9" stroke-width="1"/>
<line x1="258.5" y1="363.57000000000005" x2="974.5" y2="363.57000000000005" stroke="#a9a9a9" stroke-width="1"/>
<line x1="258.5" y1="395.56" x2="974.5" y2="395.56" stroke="#a9a9a9" stroke-width="1"/>
<line x1="258.5" y1="427.55" x2="974.5" y2="427.55" stroke="#a9a9a9" stroke-width="1"/>
<line x1="258.5" y1="459.54" x2="974.5" y2="459.54" stroke="#a9a9a9" stroke-width="1"/>
<line x1="258.5" y1="491.53" x2="974.5" y2="491.53" stroke="#a9a9a9" stroke-width="1"/>
<line x1="258.5" y1="523.52" x2="974.5" y2="523.52" stroke="#a9a9a9" stroke-width="1"/>
<line x1="258.5" y1="555.51" x2="974.5" y2="555.51" stroke="#a9a9a9" stroke-width="1"/>
<line x1="250.5" y1="267.6" x2="258.5" y2="267.6" stroke="#aaa" stroke-width="1"/>
<line x1="250.5" y1="299.59000000000003" x2="258.5" y2="299.59000000000003" stroke="#aaa" stroke-width="1"/>
<line x1="250.5" y1="331.58000000000004" x2="258.5" y2="331.58000000000004" stroke="#aaa" stroke-width="1"/>
<line x1="250.5" y1="363.57000000000005" x2="258.5" y2="363.57000000000005" stroke="#aaa" stroke-width="1"/>
<line x1="250.5" y1="395.56" x2="258.5" y2="395.56" stroke="#aaa" stroke-width="1"/>
<line x1="250.5" y1="427.55" x2="258.5" y2="427.55" stroke="#aaa" stroke-width="1"/>
<line x1="250.5" y1="459.54" x2="258.5" y2="459.54" stroke="#aaa" stroke-width="1"/>
<line x1="250.5" y1="491.53" x2="258.5" y2="491.53" stroke="#aaa" stroke-width="1"/>
<line x1="250.5" y1="523.52" x2="258.5" y2="523.52" stroke="#aaa" stroke-width="1"/>
<line x1="250.5" y1="555.51" x2="258.5" y2="555.51" stroke="#aaa" stroke-width="1"/>
<line x1="250.5" y1="587.5" x2="258.5" y2="587.5" stroke="#aaa" stroke-width="1"/>
<line x1="258.5" y1="587.5" x2="258.5" y2="595.7" stroke="#aaa" stroke-width="1"/>
<line x1="330.1" y1="587.5" x2="330.1" y2="595.7" stroke="#aaa" stroke-width="1"/>
<line x1="401.7" y1="587.5" x2="401.7" y2="595.7" stroke="#aaa" stroke-width="1"/>
<line x1="473.3" y1="587.5" x2="473.3" y2="595.7" stroke="#aaa" stroke-width="1"/>
<line x1="544.9" y1="587.5" x2="544.9" y2="595.7" stroke="#aaa" stroke-width="1"/>
<line x1="616.5" y1="587.5" x2="616.5" y2="595.7" stroke="#aaa" stroke-width="1"/>
<line x1="688.1" y1="587.5" x2="688.1" y2="595.7" stroke="#aaa" stroke-width="1"/>
<line x1="759.7" y1="587.5" x2="759.7" y2="595.7" stroke="#aaa" stroke-width="1"/>
<line x1="831.3" y1="587.5" x2="831.3" y2="595.7" stroke="#aaa" stroke-width="1"/>
<line x1="902.9" y1="587.5" x2="902.9" y2="595.7" stroke="#aaa" stroke-width="1"/>
<line x1="974.5" y1="587.5" x2="974.5" y2="595.7" stroke="#aaa" stroke-width="1"/>
<polyline points="258.50,267.60 266.64,267.60 274.77,267.60 282.91,267.60 291.05,267.60 299.18,267.60 307.32,267.60 315.45,299.59 323.59,299.59 331.73,299.59 339.86,299.59 348.00,299.59 356.14,299.59 364.27,299.59 372.41,299.59 380.55,299.59 388.68,299.59 396.82,299.59 404.95,299.59 413.09,299.59 421.23,299.59 429.36,299.59 437.50,299.59 445.64,299.59 453.77,299.59 461.91,299.59 470.05,299.59 478.18,299.59 486.32,299.59 494.45,299.59 502.59,299.59" fill="none" stroke="#3a3af5" stroke-width="2"/>
<circle cx="315.45" cy="299.59" r="1.8" fill="#3a3af5" stroke="#10104a" stroke-width="1.1"/>
<circle cx="323.59" cy="299.59" r="1.8" fill="#3a3af5" stroke="#10104a" stroke-width="1.1"/>
<circle cx="331.73" cy="299.59" r="1.8" fill="#3a3af5" stroke="#10104a" stroke-width="1.1"/>
<circle cx="339.86" cy="299.59" r="1.8" fill="#3a3af5" stroke="#10104a" stroke-width="1.1"/>
<circle cx="348.00" cy="299.59" r="1.8" fill="#3a3af5" stroke="#10104a" stroke-width="1.1"/>
<circle cx="356.14" cy="299.59" r="1.8" fill="#3a3af5" stroke="#10104a" stroke-width="1.1"/>
<circle cx="364.27" cy="299.59" r="1.8" fill="#3a3af5" stroke="#10104a" stroke-width="1.1"/>
<circle cx="372.41" cy="299.59" r="1.8" fill="#3a3af5" stroke="#10104a" stroke-width="1.1"/>
<circle cx="380.55" cy="299.59" r="1.8" fill="#3a3af5" stroke="#10104a" stroke-width="1.1"/>
<circle cx="388.68" cy="299.59" r="1.8" fill="#3a3af5" stroke="#10104a" stroke-width="1.1"/>
<circle cx="396.82" cy="299.59" r="1.8" fill="#3a3af5" stroke="#10104a" stroke-width="1.1"/>
<circle cx="404.95" cy="299.59" r="1.8" fill="#3a3af5" stroke="#10104a" stroke-width="1.1"/>
<circle cx="413.09" cy="299.59" r="1.8" fill="#3a3af5" stroke="#10104a" stroke-width="1.1"/>
<circle cx="421.23" cy="299.59" r="1.8" fill="#3a3af5" stroke="#10104a" stroke-width="1.1"/>
<circle cx="429.36" cy="299.59" r="1.8" fill="#3a3af5" stroke="#10104a" stroke-width="1.1"/>
<circle cx="437.50" cy="299.59" r="1.8" fill="#3a3af5" stroke="#10104a" stroke-width="1.1"/>
<circle cx="445.64" cy="299.59" r="1.8" fill="#3a3af5" stroke="#10104a" stroke-width="1.1"/>
<circle cx="453.77" cy="299.59" r="1.8" fill="#3a3af5" stroke="#10104a" stroke-width="1.1"/>
<circle cx="461.91" cy="299.59" r="1.8" fill="#3a3af5" stroke="#10104a" stroke-width="1.1"/>
<circle cx="470.05" cy="299.59" r="1.8" fill="#3a3af5" stroke="#10104a" stroke-width="1.1"/>
<circle cx="478.18" cy="299.59" r="1.8" fill="#3a3af5" stroke="#10104a" stroke-width="1.1"/>
<circle cx="486.32" cy="299.59" r="1.8" fill="#3a3af5" stroke="#10104a" stroke-width="1.1"/>
<circle cx="494.45" cy="299.59" r="1.8" fill="#3a3af5" stroke="#10104a" stroke-width="1.1"/>
<circle cx="502.59" cy="299.59" r="1.8" fill="#3a3af5" stroke="#10104a" stroke-width="1.1"/>
<polyline points="258.50,267.60 266.64,267.60 274.77,267.60 282.91,267.60 291.05,267.60 299.18,267.60 307.32,267.60 315.45,395.56 323.59,395.56 331.73,395.56 339.86,395.56 348.00,395.56 356.14,395.56 364.27,395.56 372.41,395.56 380.55,395.56 388.68,395.56 396.82,395.56 404.95,395.56 413.09,395.56 421.23,395.56 429.36,395.56 437.50,395.56 445.64,395.56 453.77,395.56 461.91,395.56 470.05,395.56 478.18,395.56 486.32,395.56 494.45,395.56 502.59,395.56" fill="none" stroke="#30e030" stroke-width="2"/>
<circle cx="258.50" cy="267.60" r="1.8" fill="#30d030" stroke="#123a12" stroke-width="1.1"/>
<circle cx="266.64" cy="267.60" r="1.8" fill="#30d030" stroke="#123a12" stroke-width="1.1"/>
<circle cx="274.77" cy="267.60" r="1.8" fill="#30d030" stroke="#123a12" stroke-width="1.1"/>
<circle cx="282.91" cy="267.60" r="1.8" fill="#30d030" stroke="#123a12" stroke-width="1.1"/>
<circle cx="291.05" cy="267.60" r="1.8" fill="#30d030" stroke="#123a12" stroke-width="1.1"/>
<circle cx="299.18" cy="267.60" r="1.8" fill="#30d030" stroke="#123a12" stroke-width="1.1"/>
<circle cx="307.32" cy="267.60" r="1.8" fill="#30d030" stroke="#123a12" stroke-width="1.1"/>
<circle cx="315.45" cy="395.56" r="1.8" fill="#30d030" stroke="#123a12" stroke-width="1.1"/>
<circle cx="323.59" cy="395.56" r="1.8" fill="#30d030" stroke="#123a12" stroke-width="1.1"/>
<circle cx="331.73" cy="395.56" r="1.8" fill="#30d030" stroke="#123a12" stroke-width="1.1"/>
<circle cx="339.86" cy="395.56" r="1.8" fill="#30d030" stroke="#123a12" stroke-width="1.1"/>
<circle cx="348.00" cy="395.56" r="1.8" fill="#30d030" stroke="#123a12" stroke-width="1.1"/>
<circle cx="356.14" cy="395.56" r="1.8" fill="#30d030" stroke="#123a12" stroke-width="1.1"/>
<circle cx="364.27" cy="395.56" r="1.8" fill="#30d030" stroke="#123a12" stroke-width="1.1"/>
<circle cx="372.41" cy="395.56" r="1.8" fill="#30d030" stroke="#123a12" stroke-width="1.1"/>
<circle cx="380.55" cy="395.56" r="1.8" fill="#30d030" stroke="#123a12" stroke-width="1.1"/>
<circle cx="388.68" cy="395.56" r="1.8" fill="#30d030" stroke="#123a12" stroke-width="1.1"/>
<circle cx="396.82" cy="395.56" r="1.8" fill="#30d030" stroke="#123a12" stroke-width="1.1"/>
<circle cx="404.95" cy="395.56" r="1.8" fill="#30d030" stroke="#123a12" stroke-width="1.1"/>
<circle cx="413.09" cy="395.56" r="1.8" fill="#30d030" stroke="#123a12" stroke-width="1.1"/>
<circle cx="421.23" cy="395.56" r="1.8" fill="#30d030" stroke="#123a12" stroke-width="1.1"/>
<circle cx="429.36" cy="395.56" r="1.8" fill="#30d030" stroke="#123a12" stroke-width="1.1"/>
<circle cx="437.50" cy="395.56" r="1.8" fill="#30d030" stroke="#123a12" stroke-width="1.1"/>
<circle cx="445.64" cy="395.56" r="1.8" fill="#30d030" stroke="#123a12" stroke-width="1.1"/>
<circle cx="453.77" cy="395.56" r="1.8" fill="#30d030" stroke="#123a12" stroke-width="1.1"/>
<circle cx="461.91" cy="395.56" r="1.8" fill="#30d030" stroke="#123a12" stroke-width="1.1"/>
<circle cx="470.05" cy="395.56" r="1.8" fill="#30d030" stroke="#123a12" stroke-width="1.1"/>
<circle cx="478.18" cy="395.56" r="1.8" fill="#30d030" stroke="#123a12" stroke-width="1.1"/>
<circle cx="486.32" cy="395.56" r="1.8" fill="#30d030" stroke="#123a12" stroke-width="1.1"/>
<circle cx="494.45" cy="395.56" r="1.8" fill="#30d030" stroke="#123a12" stroke-width="1.1"/>
<circle cx="502.59" cy="395.56" r="1.8" fill="#30d030" stroke="#123a12" stroke-width="1.1"/>
</svg>
<div class="a t s" style="left:-50.80px;width:300px;text-align:right;top:58.70px;font-size:8.4px;line-height:9.383px;color:#fff;font-weight:bold;letter-spacing:0px;transform:scaleX(1.12);transform-origin:right center;">2</div>
<div class="a t s" style="left:-50.80px;width:300px;text-align:right;top:90.70px;font-size:8.4px;line-height:9.383px;color:#fff;font-weight:bold;letter-spacing:0px;transform:scaleX(1.12);transform-origin:right center;">1</div>
<div class="a t s" style="left:-50.80px;width:300px;text-align:right;top:121.70px;font-size:8.4px;line-height:9.383px;color:#fff;font-weight:bold;letter-spacing:0px;transform:scaleX(1.12);transform-origin:right center;">0</div>
<div class="a t s" style="left:-50.80px;width:300px;text-align:right;top:261.70px;font-size:8.4px;line-height:9.383px;color:#fff;font-weight:bold;letter-spacing:0.1px;transform:scaleX(1.12);transform-origin:right center;">0</div>
<div class="a t s" style="left:-50.80px;width:300px;text-align:right;top:293.70px;font-size:8.4px;line-height:9.383px;color:#fff;font-weight:bold;letter-spacing:0.1px;transform:scaleX(1.12);transform-origin:right center;">-2</div>
<div class="a t s" style="left:-50.80px;width:300px;text-align:right;top:325.70px;font-size:8.4px;line-height:9.383px;color:#fff;font-weight:bold;letter-spacing:0.1px;transform:scaleX(1.12);transform-origin:right center;">-4</div>
<div class="a t s" style="left:-50.80px;width:300px;text-align:right;top:357.70px;font-size:8.4px;line-height:9.383px;color:#fff;font-weight:bold;letter-spacing:0.1px;transform:scaleX(1.12);transform-origin:right center;">-6</div>
<div class="a t s" style="left:-50.80px;width:300px;text-align:right;top:389.70px;font-size:8.4px;line-height:9.383px;color:#fff;font-weight:bold;letter-spacing:0.1px;transform:scaleX(1.12);transform-origin:right center;">-8</div>
<div class="a t s" style="left:-50.80px;width:300px;text-align:right;top:421.70px;font-size:8.4px;line-height:9.383px;color:#fff;font-weight:bold;letter-spacing:0.1px;transform:scaleX(1.12);transform-origin:right center;">-10</div>
<div class="a t s" style="left:-50.80px;width:300px;text-align:right;top:453.70px;font-size:8.4px;line-height:9.383px;color:#fff;font-weight:bold;letter-spacing:0.1px;transform:scaleX(1.12);transform-origin:right center;">-12</div>
<div class="a t s" style="left:-50.80px;width:300px;text-align:right;top:485.70px;font-size:8.4px;line-height:9.383px;color:#fff;font-weight:bold;letter-spacing:0.1px;transform:scaleX(1.12);transform-origin:right center;">-14</div>
<div class="a t s" style="left:-50.80px;width:300px;text-align:right;top:517.70px;font-size:8.4px;line-height:9.383px;color:#fff;font-weight:bold;letter-spacing:0.1px;transform:scaleX(1.12);transform-origin:right center;">-16</div>
<div class="a t s" style="left:-50.80px;width:300px;text-align:right;top:549.70px;font-size:8.4px;line-height:9.383px;color:#fff;font-weight:bold;letter-spacing:0.1px;transform:scaleX(1.12);transform-origin:right center;">-18</div>
<div class="a t s" style="left:-50.80px;width:300px;text-align:right;top:581.70px;font-size:8.4px;line-height:9.383px;color:#fff;font-weight:bold;letter-spacing:0.1px;transform:scaleX(1.12);transform-origin:right center;">-20</div>
<div class="a t s" style="left:57.60px;width:400px;text-align:center;top:138.25px;font-size:10px;line-height:11.170px;color:#fff;font-weight:bold;letter-spacing:0.3px;transform:scaleX(1.18);transform-origin:center center;">0.0</div>
<div class="a t s" style="left:57.60px;width:400px;text-align:center;top:598.25px;font-size:10px;line-height:11.170px;color:#fff;font-weight:bold;letter-spacing:0.3px;transform:scaleX(1.18);transform-origin:center center;">0.0</div>
<div class="a t s" style="left:129.20px;width:400px;text-align:center;top:138.25px;font-size:10px;line-height:11.170px;color:#fff;font-weight:bold;letter-spacing:0.3px;transform:scaleX(1.18);transform-origin:center center;">0.4</div>
<div class="a t s" style="left:129.20px;width:400px;text-align:center;top:598.25px;font-size:10px;line-height:11.170px;color:#fff;font-weight:bold;letter-spacing:0.3px;transform:scaleX(1.18);transform-origin:center center;">0.4</div>
<div class="a t s" style="left:200.80px;width:400px;text-align:center;top:138.25px;font-size:10px;line-height:11.170px;color:#fff;font-weight:bold;letter-spacing:0.3px;transform:scaleX(1.18);transform-origin:center center;">0.9</div>
<div class="a t s" style="left:200.80px;width:400px;text-align:center;top:598.25px;font-size:10px;line-height:11.170px;color:#fff;font-weight:bold;letter-spacing:0.3px;transform:scaleX(1.18);transform-origin:center center;">0.9</div>
<div class="a t s" style="left:272.40px;width:400px;text-align:center;top:138.25px;font-size:10px;line-height:11.170px;color:#fff;font-weight:bold;letter-spacing:0.3px;transform:scaleX(1.18);transform-origin:center center;">1.3</div>
<div class="a t s" style="left:272.40px;width:400px;text-align:center;top:598.25px;font-size:10px;line-height:11.170px;color:#fff;font-weight:bold;letter-spacing:0.3px;transform:scaleX(1.18);transform-origin:center center;">1.3</div>
<div class="a t s" style="left:344.00px;width:400px;text-align:center;top:138.25px;font-size:10px;line-height:11.170px;color:#fff;font-weight:bold;letter-spacing:0.3px;transform:scaleX(1.18);transform-origin:center center;">1.8</div>
<div class="a t s" style="left:344.00px;width:400px;text-align:center;top:598.25px;font-size:10px;line-height:11.170px;color:#fff;font-weight:bold;letter-spacing:0.3px;transform:scaleX(1.18);transform-origin:center center;">1.8</div>
<div class="a t s" style="left:415.60px;width:400px;text-align:center;top:138.25px;font-size:10px;line-height:11.170px;color:#fff;font-weight:bold;letter-spacing:0.3px;transform:scaleX(1.18);transform-origin:center center;">2.2</div>
<div class="a t s" style="left:415.60px;width:400px;text-align:center;top:598.25px;font-size:10px;line-height:11.170px;color:#fff;font-weight:bold;letter-spacing:0.3px;transform:scaleX(1.18);transform-origin:center center;">2.2</div>
<div class="a t s" style="left:487.20px;width:400px;text-align:center;top:138.25px;font-size:10px;line-height:11.170px;color:#fff;font-weight:bold;letter-spacing:0.3px;transform:scaleX(1.18);transform-origin:center center;">2.6</div>
<div class="a t s" style="left:487.20px;width:400px;text-align:center;top:598.25px;font-size:10px;line-height:11.170px;color:#fff;font-weight:bold;letter-spacing:0.3px;transform:scaleX(1.18);transform-origin:center center;">2.6</div>
<div class="a t s" style="left:558.80px;width:400px;text-align:center;top:138.25px;font-size:10px;line-height:11.170px;color:#fff;font-weight:bold;letter-spacing:0.3px;transform:scaleX(1.18);transform-origin:center center;">3.1</div>
<div class="a t s" style="left:558.80px;width:400px;text-align:center;top:598.25px;font-size:10px;line-height:11.170px;color:#fff;font-weight:bold;letter-spacing:0.3px;transform:scaleX(1.18);transform-origin:center center;">3.1</div>
<div class="a t s" style="left:630.40px;width:400px;text-align:center;top:138.25px;font-size:10px;line-height:11.170px;color:#fff;font-weight:bold;letter-spacing:0.3px;transform:scaleX(1.18);transform-origin:center center;">3.5</div>
<div class="a t s" style="left:630.40px;width:400px;text-align:center;top:598.25px;font-size:10px;line-height:11.170px;color:#fff;font-weight:bold;letter-spacing:0.3px;transform:scaleX(1.18);transform-origin:center center;">3.5</div>
<div class="a t s" style="left:702.00px;width:400px;text-align:center;top:138.25px;font-size:10px;line-height:11.170px;color:#fff;font-weight:bold;letter-spacing:0.3px;transform:scaleX(1.18);transform-origin:center center;">4.0</div>
<div class="a t s" style="left:702.00px;width:400px;text-align:center;top:598.25px;font-size:10px;line-height:11.170px;color:#fff;font-weight:bold;letter-spacing:0.3px;transform:scaleX(1.18);transform-origin:center center;">4.0</div>
<div class="a t s" style="left:773.60px;width:400px;text-align:center;top:138.25px;font-size:10px;line-height:11.170px;color:#fff;font-weight:bold;letter-spacing:0.3px;transform:scaleX(1.18);transform-origin:center center;">4.4</div>
<div class="a t s" style="left:773.60px;width:400px;text-align:center;top:598.25px;font-size:10px;line-height:11.170px;color:#fff;font-weight:bold;letter-spacing:0.3px;transform:scaleX(1.18);transform-origin:center center;">4.4</div>
<div class="a t s" style="left:416.20px;width:400px;text-align:center;top:150.25px;font-size:10px;line-height:11.170px;color:#fff;font-weight:bold;letter-spacing:1.3px;-webkit-text-stroke:0.45px currentColor;">Time From Launch (sec)</div>
<div class="a t s" style="left:416.20px;width:400px;text-align:center;top:609.25px;font-size:10px;line-height:11.170px;color:#fff;font-weight:bold;letter-spacing:1.3px;-webkit-text-stroke:0.45px currentColor;">Time From Launch (sec)</div>
<div class="a t s" style="left:151.7px;top:433.0px;width:120px;height:12px;line-height:12px;text-align:center;font-size:10px;font-weight:bold;color:#fff;letter-spacing:1.12px;text-indent:1.12px;transform:rotate(-90deg)">Timing Offset (°)</div>
<div class="a t s" style="left:263.00px;top:203.70px;font-size:9.5px;line-height:10.611px;color:#fff;font-weight:bold;letter-spacing:0.4px;">Select Table to Edit</div>
<div class="a" style="left:364px;top:200px;width:90px;height:16.5px;background:#e1e1e1;border:1px solid #c8c8c8"></div>
<div class="a t" style="left:367.00px;top:204.16px;font-size:9px;line-height:10.053px;color:#000;font-weight:normal;letter-spacing:-0.25px;-webkit-text-stroke:0.15px currentColor;">Retard A</div>
<svg class="a" style="left:440px;top:204px" width="12" height="10"><path d="M3 3.5 L6.5 7 L10 3.5" fill="none" stroke="#444" stroke-width="1"/></svg>
<div class="a" style="left:253.7px;top:221px;width:726.4px;height:38px;background:#fff"></div>
<div class="a" style="left:253.7px;top:221px;width:724.3px;height:17.5px;background:#a0a0a0"></div>
<div class="a" style="left:254.8px;top:222.8px;width:723.2px;height:15.6px;background:#c9c9c9;border-top:1px solid #d6d6d6"></div>
<div class="a" style="left:254.8px;top:241.8px;width:723.2px;height:15.2px;background:#2b7ce8"></div>
<div class="a" style="left:276.90px;top:222.8px;width:1px;height:15.6px;background:#bdbdbd"></div>
<div class="a" style="left:277.90px;top:222.8px;width:1px;height:15.6px;background:#d6d6d6"></div>
<div class="a" style="left:277.10px;top:241.8px;width:1.6px;height:15.2px;background:#8aa6cc"></div>
<div class="a" style="left:300.05px;top:222.8px;width:1px;height:15.6px;background:#bdbdbd"></div>
<div class="a" style="left:301.05px;top:222.8px;width:1px;height:15.6px;background:#d6d6d6"></div>
<div class="a" style="left:300.25px;top:241.8px;width:1.6px;height:15.2px;background:#8aa6cc"></div>
<div class="a" style="left:323.20px;top:222.8px;width:1px;height:15.6px;background:#bdbdbd"></div>
<div class="a" style="left:324.20px;top:222.8px;width:1px;height:15.6px;background:#d6d6d6"></div>
<div class="a" style="left:323.40px;top:241.8px;width:1.6px;height:15.2px;background:#8aa6cc"></div>
<div class="a" style="left:346.35px;top:222.8px;width:1px;height:15.6px;background:#bdbdbd"></div>
<div class="a" style="left:347.35px;top:222.8px;width:1px;height:15.6px;background:#d6d6d6"></div>
<div class="a" style="left:346.55px;top:241.8px;width:1.6px;height:15.2px;background:#8aa6cc"></div>
<div class="a" style="left:369.50px;top:222.8px;width:1px;height:15.6px;background:#bdbdbd"></div>
<div class="a" style="left:370.50px;top:222.8px;width:1px;height:15.6px;background:#d6d6d6"></div>
<div class="a" style="left:369.70px;top:241.8px;width:1.6px;height:15.2px;background:#8aa6cc"></div>
<div class="a" style="left:392.60px;top:222.8px;width:1px;height:15.6px;background:#bdbdbd"></div>
<div class="a" style="left:393.60px;top:222.8px;width:1px;height:15.6px;background:#d6d6d6"></div>
<div class="a" style="left:392.80px;top:241.8px;width:1.6px;height:15.2px;background:#8aa6cc"></div>
<div class="a" style="left:415.70px;top:222.8px;width:1px;height:15.6px;background:#bdbdbd"></div>
<div class="a" style="left:416.70px;top:222.8px;width:1px;height:15.6px;background:#d6d6d6"></div>
<div class="a" style="left:415.90px;top:241.8px;width:1.6px;height:15.2px;background:#8aa6cc"></div>
<div class="a" style="left:438.80px;top:222.8px;width:1px;height:15.6px;background:#bdbdbd"></div>
<div class="a" style="left:439.80px;top:222.8px;width:1px;height:15.6px;background:#d6d6d6"></div>
<div class="a" style="left:439.00px;top:241.8px;width:1.6px;height:15.2px;background:#8aa6cc"></div>
<div class="a" style="left:461.90px;top:222.8px;width:1px;height:15.6px;background:#bdbdbd"></div>
<div class="a" style="left:462.90px;top:222.8px;width:1px;height:15.6px;background:#d6d6d6"></div>
<div class="a" style="left:462.10px;top:241.8px;width:1.6px;height:15.2px;background:#8aa6cc"></div>
<div class="a" style="left:485.80px;top:222.8px;width:1px;height:15.6px;background:#bdbdbd"></div>
<div class="a" style="left:486.80px;top:222.8px;width:1px;height:15.6px;background:#d6d6d6"></div>
<div class="a" style="left:486.00px;top:241.8px;width:1.6px;height:15.2px;background:#8aa6cc"></div>
<div class="a" style="left:509.70px;top:222.8px;width:1px;height:15.6px;background:#bdbdbd"></div>
<div class="a" style="left:510.70px;top:222.8px;width:1px;height:15.6px;background:#d6d6d6"></div>
<div class="a" style="left:509.90px;top:241.8px;width:1.6px;height:15.2px;background:#8aa6cc"></div>
<div class="a" style="left:533.60px;top:222.8px;width:1px;height:15.6px;background:#bdbdbd"></div>
<div class="a" style="left:534.60px;top:222.8px;width:1px;height:15.6px;background:#d6d6d6"></div>
<div class="a" style="left:533.80px;top:241.8px;width:1.6px;height:15.2px;background:#8aa6cc"></div>
<div class="a" style="left:557.50px;top:222.8px;width:1px;height:15.6px;background:#bdbdbd"></div>
<div class="a" style="left:558.50px;top:222.8px;width:1px;height:15.6px;background:#d6d6d6"></div>
<div class="a" style="left:557.70px;top:241.8px;width:1.6px;height:15.2px;background:#8aa6cc"></div>
<div class="a" style="left:581.48px;top:222.8px;width:1px;height:15.6px;background:#bdbdbd"></div>
<div class="a" style="left:582.48px;top:222.8px;width:1px;height:15.6px;background:#d6d6d6"></div>
<div class="a" style="left:581.68px;top:241.8px;width:1.6px;height:15.2px;background:#8aa6cc"></div>
<div class="a" style="left:605.45px;top:222.8px;width:1px;height:15.6px;background:#bdbdbd"></div>
<div class="a" style="left:606.45px;top:222.8px;width:1px;height:15.6px;background:#d6d6d6"></div>
<div class="a" style="left:605.65px;top:241.8px;width:1.6px;height:15.2px;background:#8aa6cc"></div>
<div class="a" style="left:629.42px;top:222.8px;width:1px;height:15.6px;background:#bdbdbd"></div>
<div class="a" style="left:630.42px;top:222.8px;width:1px;height:15.6px;background:#d6d6d6"></div>
<div class="a" style="left:629.62px;top:241.8px;width:1.6px;height:15.2px;background:#8aa6cc"></div>
<div class="a" style="left:653.40px;top:222.8px;width:1px;height:15.6px;background:#bdbdbd"></div>
<div class="a" style="left:654.40px;top:222.8px;width:1px;height:15.6px;background:#d6d6d6"></div>
<div class="a" style="left:653.60px;top:241.8px;width:1.6px;height:15.2px;background:#8aa6cc"></div>
<div class="a" style="left:676.49px;top:222.8px;width:1px;height:15.6px;background:#bdbdbd"></div>
<div class="a" style="left:677.49px;top:222.8px;width:1px;height:15.6px;background:#d6d6d6"></div>
<div class="a" style="left:676.69px;top:241.8px;width:1.6px;height:15.2px;background:#8aa6cc"></div>
<div class="a" style="left:699.58px;top:222.8px;width:1px;height:15.6px;background:#bdbdbd"></div>
<div class="a" style="left:700.58px;top:222.8px;width:1px;height:15.6px;background:#d6d6d6"></div>
<div class="a" style="left:699.78px;top:241.8px;width:1.6px;height:15.2px;background:#8aa6cc"></div>
<div class="a" style="left:722.66px;top:222.8px;width:1px;height:15.6px;background:#bdbdbd"></div>
<div class="a" style="left:723.66px;top:222.8px;width:1px;height:15.6px;background:#d6d6d6"></div>
<div class="a" style="left:722.86px;top:241.8px;width:1.6px;height:15.2px;background:#8aa6cc"></div>
<div class="a" style="left:745.75px;top:222.8px;width:1px;height:15.6px;background:#bdbdbd"></div>
<div class="a" style="left:746.75px;top:222.8px;width:1px;height:15.6px;background:#d6d6d6"></div>
<div class="a" style="left:745.95px;top:241.8px;width:1.6px;height:15.2px;background:#8aa6cc"></div>
<div class="a" style="left:768.92px;top:222.8px;width:1px;height:15.6px;background:#bdbdbd"></div>
<div class="a" style="left:769.92px;top:222.8px;width:1px;height:15.6px;background:#d6d6d6"></div>
<div class="a" style="left:769.12px;top:241.8px;width:1.6px;height:15.2px;background:#8aa6cc"></div>
<div class="a" style="left:792.10px;top:222.8px;width:1px;height:15.6px;background:#bdbdbd"></div>
<div class="a" style="left:793.10px;top:222.8px;width:1px;height:15.6px;background:#d6d6d6"></div>
<div class="a" style="left:792.30px;top:241.8px;width:1.6px;height:15.2px;background:#8aa6cc"></div>
<div class="a" style="left:815.28px;top:222.8px;width:1px;height:15.6px;background:#bdbdbd"></div>
<div class="a" style="left:816.28px;top:222.8px;width:1px;height:15.6px;background:#d6d6d6"></div>
<div class="a" style="left:815.48px;top:241.8px;width:1.6px;height:15.2px;background:#8aa6cc"></div>
<div class="a" style="left:838.45px;top:222.8px;width:1px;height:15.6px;background:#bdbdbd"></div>
<div class="a" style="left:839.45px;top:222.8px;width:1px;height:15.6px;background:#d6d6d6"></div>
<div class="a" style="left:838.65px;top:241.8px;width:1.6px;height:15.2px;background:#8aa6cc"></div>
<div class="a" style="left:861.56px;top:222.8px;width:1px;height:15.6px;background:#bdbdbd"></div>
<div class="a" style="left:862.56px;top:222.8px;width:1px;height:15.6px;background:#d6d6d6"></div>
<div class="a" style="left:861.76px;top:241.8px;width:1.6px;height:15.2px;background:#8aa6cc"></div>
<div class="a" style="left:884.67px;top:222.8px;width:1px;height:15.6px;background:#bdbdbd"></div>
<div class="a" style="left:885.67px;top:222.8px;width:1px;height:15.6px;background:#d6d6d6"></div>
<div class="a" style="left:884.87px;top:241.8px;width:1.6px;height:15.2px;background:#8aa6cc"></div>
<div class="a" style="left:907.78px;top:222.8px;width:1px;height:15.6px;background:#bdbdbd"></div>
<div class="a" style="left:908.78px;top:222.8px;width:1px;height:15.6px;background:#d6d6d6"></div>
<div class="a" style="left:907.98px;top:241.8px;width:1.6px;height:15.2px;background:#8aa6cc"></div>
<div class="a" style="left:930.89px;top:222.8px;width:1px;height:15.6px;background:#bdbdbd"></div>
<div class="a" style="left:931.89px;top:222.8px;width:1px;height:15.6px;background:#d6d6d6"></div>
<div class="a" style="left:931.09px;top:241.8px;width:1.6px;height:15.2px;background:#8aa6cc"></div>
<div class="a" style="left:954.00px;top:222.8px;width:1px;height:15.6px;background:#bdbdbd"></div>
<div class="a" style="left:955.00px;top:222.8px;width:1px;height:15.6px;background:#d6d6d6"></div>
<div class="a" style="left:954.20px;top:241.8px;width:1.6px;height:15.2px;background:#8aa6cc"></div>
<div class="a t" style="left:66.35px;width:400px;text-align:center;top:226.52px;font-size:8.6px;line-height:9.606px;color:#000;font-weight:normal;letter-spacing:0px;-webkit-text-stroke:0.35px currentColor;">0.0</div>
<div class="a t" style="left:66.35px;width:400px;text-align:center;top:245.52px;font-size:8.6px;line-height:9.606px;color:#e8ec5c;font-weight:normal;letter-spacing:0px;-webkit-text-stroke:0.2px currentColor;">0.00</div>
<div class="a t" style="left:89.47px;width:400px;text-align:center;top:226.52px;font-size:8.6px;line-height:9.606px;color:#000;font-weight:normal;letter-spacing:0px;-webkit-text-stroke:0.35px currentColor;">0.0</div>
<div class="a t" style="left:89.47px;width:400px;text-align:center;top:245.52px;font-size:8.6px;line-height:9.606px;color:#e8ec5c;font-weight:normal;letter-spacing:0px;-webkit-text-stroke:0.2px currentColor;">0.05</div>
<div class="a t" style="left:112.62px;width:400px;text-align:center;top:226.52px;font-size:8.6px;line-height:9.606px;color:#000;font-weight:normal;letter-spacing:0px;-webkit-text-stroke:0.35px currentColor;">0.0</div>
<div class="a t" style="left:112.62px;width:400px;text-align:center;top:245.52px;font-size:8.6px;line-height:9.606px;color:#e8ec5c;font-weight:normal;letter-spacing:0px;-webkit-text-stroke:0.2px currentColor;">0.10</div>
<div class="a t" style="left:135.77px;width:400px;text-align:center;top:226.52px;font-size:8.6px;line-height:9.606px;color:#000;font-weight:normal;letter-spacing:0px;-webkit-text-stroke:0.35px currentColor;">0.0</div>
<div class="a t" style="left:135.77px;width:400px;text-align:center;top:245.52px;font-size:8.6px;line-height:9.606px;color:#e8ec5c;font-weight:normal;letter-spacing:0px;-webkit-text-stroke:0.2px currentColor;">0.15</div>
<div class="a t" style="left:158.93px;width:400px;text-align:center;top:226.52px;font-size:8.6px;line-height:9.606px;color:#000;font-weight:normal;letter-spacing:0px;-webkit-text-stroke:0.35px currentColor;">0.0</div>
<div class="a t" style="left:158.93px;width:400px;text-align:center;top:245.52px;font-size:8.6px;line-height:9.606px;color:#e8ec5c;font-weight:normal;letter-spacing:0px;-webkit-text-stroke:0.2px currentColor;">0.20</div>
<div class="a t" style="left:182.05px;width:400px;text-align:center;top:226.52px;font-size:8.6px;line-height:9.606px;color:#000;font-weight:normal;letter-spacing:0px;-webkit-text-stroke:0.35px currentColor;">0.0</div>
<div class="a t" style="left:182.05px;width:400px;text-align:center;top:245.52px;font-size:8.6px;line-height:9.606px;color:#e8ec5c;font-weight:normal;letter-spacing:0px;-webkit-text-stroke:0.2px currentColor;">0.25</div>
<div class="a t" style="left:205.15px;width:400px;text-align:center;top:226.52px;font-size:8.6px;line-height:9.606px;color:#000;font-weight:normal;letter-spacing:0px;-webkit-text-stroke:0.35px currentColor;">0.0</div>
<div class="a t" style="left:205.15px;width:400px;text-align:center;top:245.52px;font-size:8.6px;line-height:9.606px;color:#e8ec5c;font-weight:normal;letter-spacing:0px;-webkit-text-stroke:0.2px currentColor;">0.30</div>
<div class="a t" style="left:228.25px;width:400px;text-align:center;top:226.52px;font-size:8.6px;line-height:9.606px;color:#000;font-weight:normal;letter-spacing:0px;-webkit-text-stroke:0.35px currentColor;">-2.0</div>
<div class="a t" style="left:228.25px;width:400px;text-align:center;top:245.52px;font-size:8.6px;line-height:9.606px;color:#e8ec5c;font-weight:normal;letter-spacing:0px;-webkit-text-stroke:0.2px currentColor;">0.35</div>
<div class="a t" style="left:251.35px;width:400px;text-align:center;top:226.52px;font-size:8.6px;line-height:9.606px;color:#000;font-weight:normal;letter-spacing:0px;-webkit-text-stroke:0.35px currentColor;">-2.0</div>
<div class="a t" style="left:251.35px;width:400px;text-align:center;top:245.52px;font-size:8.6px;line-height:9.606px;color:#e8ec5c;font-weight:normal;letter-spacing:0px;-webkit-text-stroke:0.2px currentColor;">0.40</div>
<div class="a t" style="left:274.85px;width:400px;text-align:center;top:226.52px;font-size:8.6px;line-height:9.606px;color:#000;font-weight:normal;letter-spacing:0px;-webkit-text-stroke:0.35px currentColor;">-2.0</div>
<div class="a t" style="left:274.85px;width:400px;text-align:center;top:245.52px;font-size:8.6px;line-height:9.606px;color:#e8ec5c;font-weight:normal;letter-spacing:0px;-webkit-text-stroke:0.2px currentColor;">0.45</div>
<div class="a t" style="left:298.75px;width:400px;text-align:center;top:226.52px;font-size:8.6px;line-height:9.606px;color:#000;font-weight:normal;letter-spacing:0px;-webkit-text-stroke:0.35px currentColor;">-2.0</div>
<div class="a t" style="left:298.75px;width:400px;text-align:center;top:245.52px;font-size:8.6px;line-height:9.606px;color:#e8ec5c;font-weight:normal;letter-spacing:0px;-webkit-text-stroke:0.2px currentColor;">0.50</div>
<div class="a t" style="left:322.65px;width:400px;text-align:center;top:226.52px;font-size:8.6px;line-height:9.606px;color:#000;font-weight:normal;letter-spacing:0px;-webkit-text-stroke:0.35px currentColor;">-2.0</div>
<div class="a t" style="left:322.65px;width:400px;text-align:center;top:245.52px;font-size:8.6px;line-height:9.606px;color:#e8ec5c;font-weight:normal;letter-spacing:0px;-webkit-text-stroke:0.2px currentColor;">0.55</div>
<div class="a t" style="left:346.55px;width:400px;text-align:center;top:226.52px;font-size:8.6px;line-height:9.606px;color:#000;font-weight:normal;letter-spacing:0px;-webkit-text-stroke:0.35px currentColor;">-2.0</div>
<div class="a t" style="left:346.55px;width:400px;text-align:center;top:245.52px;font-size:8.6px;line-height:9.606px;color:#e8ec5c;font-weight:normal;letter-spacing:0px;-webkit-text-stroke:0.2px currentColor;">0.60</div>
<div class="a t" style="left:370.49px;width:400px;text-align:center;top:226.52px;font-size:8.6px;line-height:9.606px;color:#000;font-weight:normal;letter-spacing:0px;-webkit-text-stroke:0.35px currentColor;">-2.0</div>
<div class="a t" style="left:370.49px;width:400px;text-align:center;top:245.52px;font-size:8.6px;line-height:9.606px;color:#e8ec5c;font-weight:normal;letter-spacing:0px;-webkit-text-stroke:0.2px currentColor;">0.65</div>
<div class="a t" style="left:394.46px;width:400px;text-align:center;top:226.52px;font-size:8.6px;line-height:9.606px;color:#000;font-weight:normal;letter-spacing:0px;-webkit-text-stroke:0.35px currentColor;">-2.0</div>
<div class="a t" style="left:394.46px;width:400px;text-align:center;top:245.52px;font-size:8.6px;line-height:9.606px;color:#e8ec5c;font-weight:normal;letter-spacing:0px;-webkit-text-stroke:0.2px currentColor;">0.70</div>
<div class="a t" style="left:418.44px;width:400px;text-align:center;top:226.52px;font-size:8.6px;line-height:9.606px;color:#000;font-weight:normal;letter-spacing:0px;-webkit-text-stroke:0.35px currentColor;">-2.0</div>
<div class="a t" style="left:418.44px;width:400px;text-align:center;top:245.52px;font-size:8.6px;line-height:9.606px;color:#e8ec5c;font-weight:normal;letter-spacing:0px;-webkit-text-stroke:0.2px currentColor;">0.75</div>
<div class="a t" style="left:442.41px;width:400px;text-align:center;top:226.52px;font-size:8.6px;line-height:9.606px;color:#000;font-weight:normal;letter-spacing:0px;-webkit-text-stroke:0.35px currentColor;">-2.0</div>
<div class="a t" style="left:442.41px;width:400px;text-align:center;top:245.52px;font-size:8.6px;line-height:9.606px;color:#e8ec5c;font-weight:normal;letter-spacing:0px;-webkit-text-stroke:0.2px currentColor;">0.80</div>
<div class="a t" style="left:465.94px;width:400px;text-align:center;top:226.52px;font-size:8.6px;line-height:9.606px;color:#000;font-weight:normal;letter-spacing:0px;-webkit-text-stroke:0.35px currentColor;">-2.0</div>
<div class="a t" style="left:465.94px;width:400px;text-align:center;top:245.52px;font-size:8.6px;line-height:9.606px;color:#e8ec5c;font-weight:normal;letter-spacing:0px;-webkit-text-stroke:0.2px currentColor;">0.85</div>
<div class="a t" style="left:489.03px;width:400px;text-align:center;top:226.52px;font-size:8.6px;line-height:9.606px;color:#000;font-weight:normal;letter-spacing:0px;-webkit-text-stroke:0.35px currentColor;">-2.0</div>
<div class="a t" style="left:489.03px;width:400px;text-align:center;top:245.52px;font-size:8.6px;line-height:9.606px;color:#e8ec5c;font-weight:normal;letter-spacing:0px;-webkit-text-stroke:0.2px currentColor;">0.90</div>
<div class="a t" style="left:512.12px;width:400px;text-align:center;top:226.52px;font-size:8.6px;line-height:9.606px;color:#000;font-weight:normal;letter-spacing:0px;-webkit-text-stroke:0.35px currentColor;">-2.0</div>
<div class="a t" style="left:512.12px;width:400px;text-align:center;top:245.52px;font-size:8.6px;line-height:9.606px;color:#e8ec5c;font-weight:normal;letter-spacing:0px;-webkit-text-stroke:0.2px currentColor;">0.95</div>
<div class="a t" style="left:535.21px;width:400px;text-align:center;top:226.52px;font-size:8.6px;line-height:9.606px;color:#000;font-weight:normal;letter-spacing:0px;-webkit-text-stroke:0.35px currentColor;">-2.0</div>
<div class="a t" style="left:535.21px;width:400px;text-align:center;top:245.52px;font-size:8.6px;line-height:9.606px;color:#e8ec5c;font-weight:normal;letter-spacing:0px;-webkit-text-stroke:0.2px currentColor;">1.00</div>
<div class="a t" style="left:558.34px;width:400px;text-align:center;top:226.52px;font-size:8.6px;line-height:9.606px;color:#000;font-weight:normal;letter-spacing:0px;-webkit-text-stroke:0.35px currentColor;">-2.0</div>
<div class="a t" style="left:558.34px;width:400px;text-align:center;top:245.52px;font-size:8.6px;line-height:9.606px;color:#e8ec5c;font-weight:normal;letter-spacing:0px;-webkit-text-stroke:0.2px currentColor;">1.05</div>
<div class="a t" style="left:581.51px;width:400px;text-align:center;top:226.52px;font-size:8.6px;line-height:9.606px;color:#000;font-weight:normal;letter-spacing:0px;-webkit-text-stroke:0.35px currentColor;">-2.0</div>
<div class="a t" style="left:581.51px;width:400px;text-align:center;top:245.52px;font-size:8.6px;line-height:9.606px;color:#e8ec5c;font-weight:normal;letter-spacing:0px;-webkit-text-stroke:0.2px currentColor;">1.10</div>
<div class="a t" style="left:604.69px;width:400px;text-align:center;top:226.52px;font-size:8.6px;line-height:9.606px;color:#000;font-weight:normal;letter-spacing:0px;-webkit-text-stroke:0.35px currentColor;">-2.0</div>
<div class="a t" style="left:604.69px;width:400px;text-align:center;top:245.52px;font-size:8.6px;line-height:9.606px;color:#e8ec5c;font-weight:normal;letter-spacing:0px;-webkit-text-stroke:0.2px currentColor;">1.15</div>
<div class="a t" style="left:627.86px;width:400px;text-align:center;top:226.52px;font-size:8.6px;line-height:9.606px;color:#000;font-weight:normal;letter-spacing:0px;-webkit-text-stroke:0.35px currentColor;">-2.0</div>
<div class="a t" style="left:627.86px;width:400px;text-align:center;top:245.52px;font-size:8.6px;line-height:9.606px;color:#e8ec5c;font-weight:normal;letter-spacing:0px;-webkit-text-stroke:0.2px currentColor;">1.20</div>
<div class="a t" style="left:651.01px;width:400px;text-align:center;top:226.52px;font-size:8.6px;line-height:9.606px;color:#000;font-weight:normal;letter-spacing:0px;-webkit-text-stroke:0.35px currentColor;">-2.0</div>
<div class="a t" style="left:651.01px;width:400px;text-align:center;top:245.52px;font-size:8.6px;line-height:9.606px;color:#e8ec5c;font-weight:normal;letter-spacing:0px;-webkit-text-stroke:0.2px currentColor;">1.25</div>
<div class="a t" style="left:674.12px;width:400px;text-align:center;top:226.52px;font-size:8.6px;line-height:9.606px;color:#000;font-weight:normal;letter-spacing:0px;-webkit-text-stroke:0.35px currentColor;">-2.0</div>
<div class="a t" style="left:674.12px;width:400px;text-align:center;top:245.52px;font-size:8.6px;line-height:9.606px;color:#e8ec5c;font-weight:normal;letter-spacing:0px;-webkit-text-stroke:0.2px currentColor;">1.30</div>
<div class="a t" style="left:697.23px;width:400px;text-align:center;top:226.52px;font-size:8.6px;line-height:9.606px;color:#000;font-weight:normal;letter-spacing:0px;-webkit-text-stroke:0.35px currentColor;">-2.0</div>
<div class="a t" style="left:697.23px;width:400px;text-align:center;top:245.52px;font-size:8.6px;line-height:9.606px;color:#e8ec5c;font-weight:normal;letter-spacing:0px;-webkit-text-stroke:0.2px currentColor;">1.35</div>
<div class="a t" style="left:720.34px;width:400px;text-align:center;top:226.52px;font-size:8.6px;line-height:9.606px;color:#000;font-weight:normal;letter-spacing:0px;-webkit-text-stroke:0.35px currentColor;">-2.0</div>
<div class="a t" style="left:720.34px;width:400px;text-align:center;top:245.52px;font-size:8.6px;line-height:9.606px;color:#e8ec5c;font-weight:normal;letter-spacing:0px;-webkit-text-stroke:0.2px currentColor;">1.40</div>
<div class="a t" style="left:743.44px;width:400px;text-align:center;top:226.52px;font-size:8.6px;line-height:9.606px;color:#000;font-weight:normal;letter-spacing:0px;-webkit-text-stroke:0.35px currentColor;">-2.0</div>
<div class="a t" style="left:743.44px;width:400px;text-align:center;top:245.52px;font-size:8.6px;line-height:9.606px;color:#e8ec5c;font-weight:normal;letter-spacing:0px;-webkit-text-stroke:0.2px currentColor;">1.45</div>
<div class="a t" style="left:766.50px;width:400px;text-align:center;top:226.52px;font-size:8.6px;line-height:9.606px;color:#000;font-weight:normal;letter-spacing:0px;-webkit-text-stroke:0.35px currentColor;">-2.0</div>
<div class="a t" style="left:766.50px;width:400px;text-align:center;top:245.52px;font-size:8.6px;line-height:9.606px;color:#e8ec5c;font-weight:normal;letter-spacing:0px;-webkit-text-stroke:0.2px currentColor;">1.50</div>
<div class="a t s" style="left:212.60px;top:223.70px;font-size:9.5px;line-height:10.611px;color:#0000ff;font-weight:bold;letter-spacing:0.3px;">Timing</div>
<div class="a t s" style="left:-55.20px;width:300px;text-align:right;top:242.70px;font-size:9.5px;line-height:10.611px;color:#fff;font-weight:bold;letter-spacing:0.3px;">Time</div>
</div></div>
</body></html>
